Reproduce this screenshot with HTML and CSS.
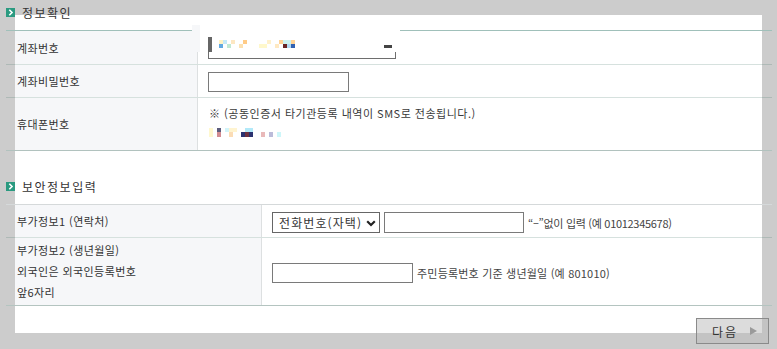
FILE: index.html
```html
<!DOCTYPE html>
<html lang="ko">
<head>
  <meta charset="utf-8">
  <title>정보확인</title>
  <link rel="stylesheet" href="styles.css">
</head>
<body>
  <div class="page">
    <h2 class="sec-title">
      <svg class="bullet" width="9" height="9" viewBox="0 0 9 9"><rect width="9" height="9" fill="#2a9a80"/><path d="M3.3 1.8 L6 4.5 L3.3 7.2" fill="none" stroke="#fff" stroke-width="1.6"/></svg>
      정보확인
    </h2>
    <div class="form-table info">
      <div class="row acct">
        <div class="label">계좌번호</div>
        <div class="value">
          <!-- 가려진 계좌번호 표시 -->
          <div class="masked">
            <span class="caret"></span>
            <svg class="mosaic" width="80" height="8" viewBox="0 0 80 8">
              <rect x="0" y="0" width="4" height="4" fill="#fff2c4"/>
              <rect x="4" y="0" width="4" height="4" fill="#c4e9f8"/>
              <rect x="12" y="0" width="4" height="4" fill="#fde7c2"/>
              <rect x="24" y="0" width="4" height="4" fill="#ffcb86"/>
              <rect x="48" y="0" width="4" height="4" fill="#fff1cb"/>
              <rect x="60" y="0" width="4" height="4" fill="#ffd396"/>
              <rect x="64" y="0" width="8" height="4" fill="#cdf2f0"/>
              <rect x="72" y="0" width="4" height="4" fill="#ffd396"/>
              <rect x="0" y="4" width="4" height="4" fill="#62a9e0"/>
              <rect x="8" y="4" width="4" height="4" fill="#c2e9d2"/>
              <rect x="20" y="4" width="4" height="4" fill="#fce1b2"/>
              <rect x="40" y="4" width="8" height="4" fill="#fff8cb"/>
              <rect x="56" y="4" width="4" height="4" fill="#ffe9c2"/>
              <rect x="64" y="4" width="4" height="4" fill="#6a2424"/>
              <rect x="68" y="4" width="4" height="4" fill="#b3d9f1"/>
              <rect x="72" y="4" width="4" height="4" fill="#3262b2"/>
            </svg>
            <span class="dash"></span>
          </div>
          <div class="masked-edge"></div>
        </div>
      </div>
      <div class="row">
        <div class="label">계좌비밀번호</div>
        <div class="value">
          <input type="password" class="text-input pw">
        </div>
      </div>
      <div class="row phone">
        <div class="label">휴대폰번호</div>
        <div class="value stack">
          <p class="note">※ (공동인증서 타기관등록 내역이 SMS로 전송됩니다.)</p>
          <svg class="mosaic" width="76" height="9" viewBox="0 0 76 9">
            <rect x="0" y="0" width="4" height="9" fill="#fff8cf"/>
            <rect x="8" y="0" width="4" height="4" fill="#5c5c7c"/>
            <rect x="8" y="4" width="4" height="5" fill="#d28c92"/>
            <rect x="16" y="0" width="4" height="4" fill="#d2f4fa"/>
            <rect x="20" y="0" width="8" height="4" fill="#fff4d0"/>
            <rect x="20" y="4" width="4" height="5" fill="#fbdcb5"/>
            <rect x="32" y="4" width="12" height="5" fill="#2b3270"/>
            <rect x="36" y="4" width="4" height="5" fill="#6b3040"/>
            <rect x="36" y="0" width="8" height="4" fill="#b2e9f9"/>
            <rect x="52" y="4" width="4" height="5" fill="#e9b9b9"/>
            <rect x="60" y="4" width="4" height="5" fill="#bbbbd9"/>
            <rect x="68" y="4" width="4" height="5" fill="#cdf6f9"/>
          </svg>
        </div>
      </div>
    </div>

    <h2 class="sec-title second">
      <svg class="bullet" width="9" height="9" viewBox="0 0 9 9"><rect width="9" height="9" fill="#2a9a80"/><path d="M3.3 1.8 L6 4.5 L3.3 7.2" fill="none" stroke="#fff" stroke-width="1.6"/></svg>
      보안정보입력
    </h2>
    <div class="form-table secure">
      <div class="row contact">
        <div class="label">부가정보1 (연락처)</div>
        <div class="value">
          <span class="select-box">
            <select class="tel-type">
              <option>전화번호(자택)</option>
              <option>휴대폰번호</option>
            </select>
            <svg class="chevron" width="10" height="7" viewBox="0 0 10 7"><path d="M1.2 1.3 L5 5 L8.8 1.3" fill="none" stroke="#222" stroke-width="2.2"/></svg>
          </span>
          <input type="text" class="text-input tel">
          <span class="hint">“–”없이 입력 (예 01012345678)</span>
        </div>
      </div>
      <div class="row birth">
        <div class="label multi">
          <span>부가정보2 (생년월일)</span>
          <span>외국인은 외국인등록번호</span>
          <span>앞6자리</span>
        </div>
        <div class="value">
          <input type="text" class="text-input birth-no">
          <span class="hint">주민등록번호 기준 생년월일 (예 801010)</span>
        </div>
      </div>
    </div>

    <div class="btn-area">
      <button type="button" class="btn-next">다음<span class="arrow"></span></button>
    </div>
  </div>
</body>
</html>
```

FILE: styles.css
```css
html, body {
  height: 100%;
}
body {
  margin: 0;
  font-family: "Noto Sans CJK KR", "Noto Sans", sans-serif;
  font-size: 11px;
  color: #333;
  background: linear-gradient(#fff, #fff) 15px 15px / 747px 318px no-repeat #cccccc;
}
.page {
  padding: 0 5px 0 6px;
}
.sec-title {
  display: flex;
  align-items: center;
  gap: 7px;
  height: 24px;
  margin: 0 0 6px;
  font-size: 12px;
  font-weight: normal;
  letter-spacing: 1.5px;
  color: #333;
}
.sec-title.second {
  margin-top: 23px;
}
.bullet {
  flex: none;
  margin-top: 1px;
}

/* 표 */
.form-table .row {
  display: flex;
  border-bottom: 1px solid rgba(70, 120, 105, 0.22);
}
.form-table .label {
  display: flex;
  align-items: center;
  padding-left: 11px;
  background: linear-gradient(to right, transparent 9px, #f6f7f9 9px);
  box-sizing: border-box;
  letter-spacing: 0.4px;
}
.form-table .value {
  flex: 1;
  display: flex;
  align-items: center;
  padding-left: 10px;
  border-left: 1px solid #dde0e1;
}
.info {
  border-top: 1px solid #a0c0ba;
}
.info .label {
  width: 191px;
}
.info .row.acct {
  height: 33px;
}
.info .row {
  height: 32px;
}
.info .row.phone {
  height: 52px;
  border-bottom-color: #b1c2be;
}
.acct .value {
  position: relative;
}
.masked {
  position: absolute;
  left: -6px;
  top: -6px;
  width: 208px;
  height: 27px;
  background: linear-gradient(to right, #f6f7f9 8px, #fff 8px);
}
.masked .caret {
  position: absolute;
  left: 16px;
  top: 12px;
  width: 4px;
  height: 15px;
  background: #666;
}
.masked .mosaic {
  position: absolute;
  left: 27px;
  top: 15px;
}
.masked .dash {
  position: absolute;
  left: 192px;
  top: 20px;
  width: 8px;
  height: 3px;
  background: #444;
}
.masked-edge {
  position: absolute;
  left: 10px;
  top: 21px;
  width: 186px;
  height: 6px;
  border: 1px solid #6e6e6e;
  border-top: none;
}
.text-input {
  box-sizing: border-box;
  height: 20px;
  margin: 0;
  padding: 0 4px;
  border: 1px solid #7a7a7a;
  background: #fff;
  font: inherit;
}
.text-input.pw {
  width: 141px;
  margin-top: 1px;
}
.value.stack {
  flex-direction: column;
  align-items: flex-start;
  justify-content: flex-start;
  padding-top: 7px;
  padding-left: 11px;
}
.note {
  margin: 0;
  line-height: 16px;
  letter-spacing: 0.5px;
  color: #3a3a3a;
}
.stack .mosaic {
  margin-top: 7px;
}

/* 보안정보 */
.secure {
  border-top: 1px solid #d5d9da;
}
.secure .label {
  width: 255px;
}
.secure .row.contact {
  height: 32px;
}
.secure .row.birth {
  height: 67px;
  border-bottom-color: #b4c4c0;
}
.secure .value {
  padding-top: 3px;
  box-sizing: border-box;
}
.secure .birth .value {
  padding-top: 2px;
}
.label.multi {
  flex-direction: column;
  align-items: flex-start;
  justify-content: center;
  line-height: 21px;
}
.select-box {
  position: relative;
  display: inline-block;
  height: 21px;
}
.tel-type {
  appearance: none;
  -webkit-appearance: none;
  box-sizing: border-box;
  width: 108px;
  height: 21px;
  margin: 0;
  padding: 0 0 0 6px;
  border: 1px solid #666;
  border-radius: 0;
  background: #fff;
  font-family: inherit;
  font-size: 12px;
  letter-spacing: 1.1px;
  color: #333;
}
.chevron {
  position: absolute;
  right: 4px;
  top: 8px;
  pointer-events: none;
}
.text-input.tel {
  width: 140px;
  height: 21px;
  margin-left: 4px;
}
.text-input.birth-no {
  width: 141px;
}
.hint {
  margin-left: 4px;
  color: #444;
  letter-spacing: -0.3px;
}
.birth .hint {
  letter-spacing: 0.2px;
}

.btn-area {
  display: flex;
  justify-content: flex-end;
  padding: 12px 3px 0 0;
}
.btn-next {
  display: flex;
  align-items: center;
  box-sizing: border-box;
  width: 73px;
  height: 26px;
  padding: 0 0 0 15px;
  border: 1px solid #8a8a8a;
  background: rgba(185, 185, 185, 0.5);
  font-family: inherit;
  font-size: 12px;
  letter-spacing: 2px;
  color: #333;
  cursor: pointer;
}
.btn-next .arrow {
  width: 0;
  height: 0;
  margin-left: 12px;
  border-top: 4.5px solid transparent;
  border-bottom: 4.5px solid transparent;
  border-left: 7px solid #9a9a9a;
}
```
